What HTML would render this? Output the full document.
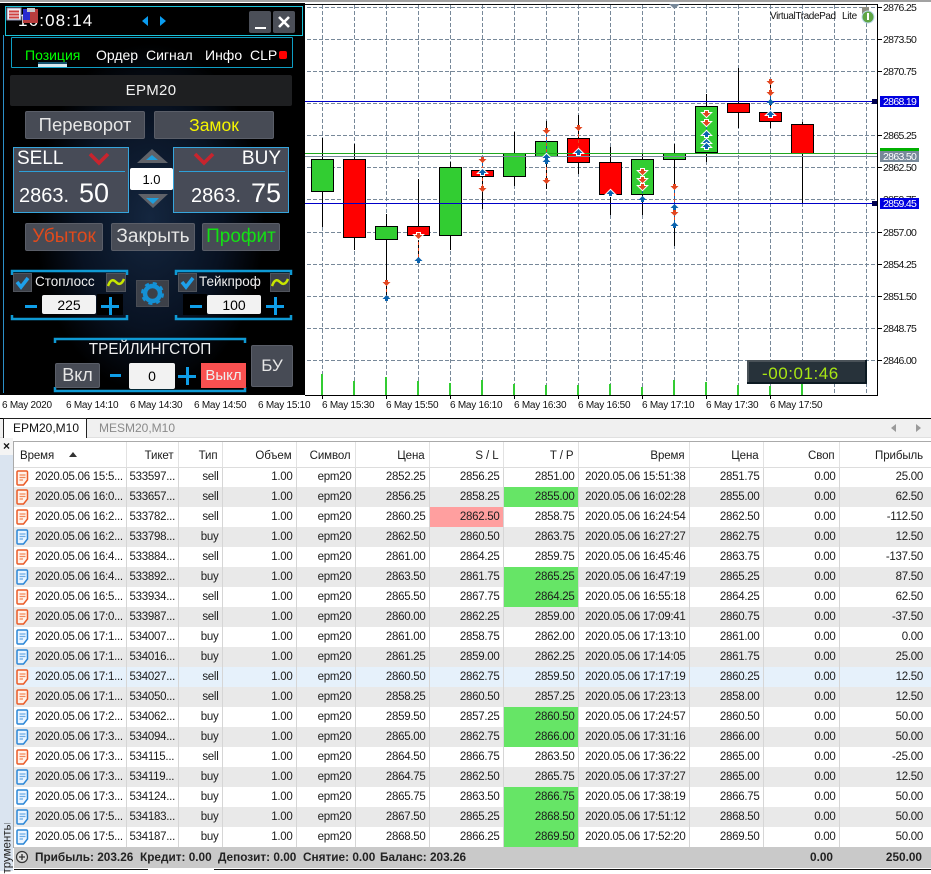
<!DOCTYPE html>
<html><head><meta charset="utf-8"><style>
html,body{margin:0;padding:0;background:#fff;width:931px;height:871px;overflow:hidden;font-family:"Liberation Sans",sans-serif}
.a{position:absolute;box-sizing:border-box;white-space:nowrap}
.c{display:flex;align-items:center;justify-content:center}
.btn{background:#474b55;border:1px solid #5a5e68;border-radius:2px;color:#e6e6e6}
.t{top:850px;font-size:11.8px;line-height:15px;font-weight:bold;color:#222}
table{position:absolute;left:14px;top:442px;width:917px;border-collapse:collapse;table-layout:fixed;font-size:11.5px;letter-spacing:-.27px;color:#1c1c1c}
td,th{height:20px;padding:0 3px 0 0;text-align:right;border-right:1px solid #d6d6d6;overflow:hidden;white-space:nowrap;box-sizing:border-box;font-weight:normal}
th{height:25px;background:#fff;border-bottom:1px solid #ddd;padding:3px 4px 0 0;border-right:1px solid #e2e2e2;letter-spacing:-.1px}
td:last-child,th:last-child{padding-right:8px;border-right:0}
tr.g td{background:#e9e9e9}tr.h td{background:#e6f1fb}
td.d{text-align:left;padding-left:21px;position:relative}
td.n{text-align:left;padding-left:3px}
td.p{background:#ff9f9f!important}td.u{background:#66e566!important}
td.d svg{position:absolute;left:2px;top:2px}
</style></head><body>
<svg class="a" style="left:0;top:0" width="931" height="420" viewBox="0 0 931 420" font-family="Liberation Sans,sans-serif">
<defs>
<path id="dn" d="M-1.500-3h3v2h2.500L0 3l-4-4h2.500z" fill="#e2451f"/>
<path id="up" d="M0-3l4 4H1.500v2h-3V1H-4z" fill="#0a62ae"/>
<path id="dnw" d="M-1.500-3h3v2h2.500L0 3l-4-4h2.500z" fill="#e2451f" stroke="#fff" stroke-width="2" paint-order="stroke"/>
<path id="upw" d="M0-3l4 4H1.500v2h-3V1H-4z" fill="#0a62ae" stroke="#fff" stroke-width="2" paint-order="stroke"/>
</defs>
<rect x="0" y="0" width="931" height="2" fill="#a2a2a2"/>
<rect x="305" y="4" width="572" height="1" fill="#111"/>
<g stroke="#778899" stroke-dasharray="4 2" shape-rendering="crispEdges" fill="none">
<path d="M307 7.500H877M307 39.500H877M307 71.500H877M307 103.500H877M307 135.500H877M307 167.500H877M307 199.500H877M307 232.500H877M307 264.500H877M307 296.500H877M307 328.500H877M307 360.500H877"/>
<path d="M322.500 5V395M354.500 5V395M386.500 5V395M418.500 5V395M450.500 5V395M482.500 5V395M514.500 5V395M546.500 5V395M578.500 5V395M610.500 5V395M642.500 5V395M674.500 5V395M706.500 5V395M738.500 5V395M770.500 5V395M802.500 5V395M834.500 5V395M866.500 5V395"/>
</g>
<g fill="#33cc33">
<rect x="321" y="374" width="2" height="21"/><rect x="353" y="381" width="2" height="14"/><rect x="385" y="377" width="2" height="18"/><rect x="417" y="381" width="2" height="14"/><rect x="449" y="383" width="2" height="12"/><rect x="481" y="380" width="2" height="15"/><rect x="513" y="384" width="2" height="11"/><rect x="545" y="385" width="2" height="10"/><rect x="577" y="385" width="2" height="10"/><rect x="609" y="384" width="2" height="11"/><rect x="641" y="387" width="2" height="8"/><rect x="673" y="380" width="2" height="15"/><rect x="705" y="382" width="2" height="13"/><rect x="737" y="385" width="2" height="10"/><rect x="769" y="386" width="2" height="9"/><rect x="801" y="384" width="2" height="11"/>
</g>
<path shape-rendering="crispEdges" stroke="#000" fill="none" d="M322.500 138V227M354.500 144V250M386.500 214V298M418.500 179V260M450.500 162V250M482.500 158V209M514.500 132V186M546.500 121V189M578.500 115V174M610.500 147V215M642.500 153V215M674.500 144V246M706.500 94V162M738.500 68V128M770.500 79V128M802.500 122V203"/>
<g shape-rendering="crispEdges" stroke="#000">
<rect x="311.500" y="159.500" width="22" height="32" fill="#32cd32"/>
<rect x="343.500" y="159.500" width="22" height="78" fill="#f00"/>
<rect x="375.500" y="226.500" width="22" height="13" fill="#32cd32"/>
<rect x="407.500" y="226.500" width="22" height="9" fill="#f00"/>
<rect x="439.500" y="167.500" width="22" height="68" fill="#32cd32"/>
<rect x="471.500" y="170.500" width="22" height="6" fill="#f00"/>
<rect x="503.500" y="153.500" width="22" height="23" fill="#32cd32"/>
<rect x="535.500" y="141.500" width="22" height="15" fill="#32cd32"/>
<rect x="567.500" y="138.500" width="22" height="24" fill="#f00"/>
<rect x="599.500" y="162.500" width="22" height="32" fill="#f00"/>
<rect x="631.500" y="159.500" width="22" height="35" fill="#32cd32"/>
<rect x="663.500" y="153.500" width="22" height="6" fill="#32cd32"/>
<rect x="695.500" y="106.500" width="22" height="46" fill="#32cd32"/>
<rect x="727.500" y="103.500" width="22" height="9" fill="#f00"/>
<rect x="759.500" y="112.500" width="22" height="9" fill="#f00"/>
<rect x="791.500" y="124.500" width="22" height="29" fill="#f00"/>
</g>
<g shape-rendering="crispEdges" fill="none" stroke-dasharray="3 3">
<path stroke="#e2451f" d="M386.500 283V298M418.500 236V260M482.500 160V189M546.500 131V181M578.500 128V152M642.500 172V199M674.500 187V225M706.500 114V146M770.500 82V114"/>
<path stroke="#0a62ae" stroke-dashoffset="3" d="M482.500 160V172M546.500 131V161M642.500 187V199M674.500 187V225M706.500 123V146M770.500 93V114"/>
</g>
<g shape-rendering="crispEdges">
<rect x="305" y="153" width="572" height="1" fill="#1fa81f"/>
<rect x="305" y="156" width="572" height="1" fill="#778899"/>
<rect x="305" y="101" width="572" height="1" fill="#0000c8"/>
<rect x="305" y="203" width="572" height="1" fill="#0000c8"/>
</g>
<use href="#dn" x="482.500" y="160"/><use href="#upw" x="482.500" y="172"/><use href="#dn" x="482.500" y="189"/>
<use href="#dn" x="546.500" y="131"/><use href="#upw" x="546.500" y="157"/><use href="#up" x="546.500" y="161"/><use href="#dn" x="546.500" y="181"/>
<use href="#dn" x="578.500" y="128"/><use href="#upw" x="578.500" y="152"/>
<use href="#upw" x="610.500" y="193"/>
<use href="#dn" x="386.500" y="283"/><use href="#up" x="386.500" y="298"/>
<use href="#dnw" x="418.500" y="236"/><use href="#up" x="418.500" y="260"/>
<use href="#dnw" x="706.500" y="114"/><use href="#dnw" x="706.500" y="123"/><use href="#upw" x="706.500" y="134"/><use href="#upw" x="706.500" y="142"/><use href="#upw" x="706.500" y="146"/>
<use href="#dn" x="770.500" y="82"/><use href="#dn" x="770.500" y="93"/><use href="#up" x="770.500" y="102"/><use href="#upw" x="770.500" y="114"/>
<use href="#dnw" x="642.500" y="172"/><use href="#dnw" x="642.500" y="180"/><use href="#dnw" x="642.500" y="187"/><use href="#up" x="642.500" y="199"/>
<use href="#dn" x="674.500" y="187"/><use href="#up" x="674.500" y="207"/><use href="#dn" x="674.500" y="213"/><use href="#up" x="674.500" y="225"/>
<path d="M669 4h11l-5.500 5z" fill="#778899"/>
<rect x="305" y="395" width="573" height="1" fill="#000"/>
<rect x="877" y="4" width="1" height="392" fill="#000"/>
<path shape-rendering="crispEdges" stroke="#000" d="M877 7.500h5M877 39.500h5M877 71.500h5M877 135.500h5M877 167.500h5M877 232.500h5M877 264.500h5M877 296.500h5M877 328.500h5M877 360.500h5M322.500 395v4M386.500 395v4M450.500 395v4M514.500 395v4M578.500 395v4M642.500 395v4M706.500 395v4M770.500 395v4"/>
<g font-size="10.500" letter-spacing="-.68" fill="#111">
<text x="883" y="11">2876.25</text><text x="883" y="43">2873.50</text><text x="883" y="75">2870.75</text><text x="883" y="139">2865.25</text><text x="883" y="171">2862.50</text><text x="883" y="236">2857.00</text><text x="883" y="268">2854.25</text><text x="883" y="300">2851.50</text><text x="883" y="332">2848.75</text><text x="883" y="364">2846.00</text><text x="883" y="203">2859.75</text>
</g>
<rect x="880" y="148" width="39" height="3" fill="#00b000"/>
<rect x="880" y="151" width="39" height="11" fill="#778899"/>
<text x="883" y="160" font-size="10.500" letter-spacing="-.68" fill="#fff">2863.50</text>
<rect x="880" y="96" width="39" height="11" fill="#0000e0"/><rect x="872" y="99" width="5" height="5" fill="#000050"/>
<text x="883" y="105" font-size="10.500" letter-spacing="-.68" fill="#fff">2868.19</text>
<rect x="880" y="198" width="39" height="11" fill="#0000e0"/><rect x="872" y="201" width="5" height="5" fill="#000050"/>
<text x="883" y="207" font-size="10.500" letter-spacing="-.68" fill="#fff">2859.45</text>
<text x="770" y="19" font-size="10" letter-spacing="-.4" fill="#111">VirtualTradePad</text>
<text x="842" y="19" font-size="10" letter-spacing="-.3" fill="#111">Lite</text>
<rect x="862" y="7" width="7" height="9" fill="#8c8c80"/><circle cx="868" cy="17" r="6" fill="#5ea545" stroke="#bcd9ef" stroke-width="1"/><rect x="867" y="13" width="2" height="7" fill="#fff"/>
<g font-size="10" letter-spacing="-.25" fill="#111">
<text x="2" y="408">6 May 2020</text><text x="66" y="408">6 May 14:10</text><text x="130" y="408">6 May 14:30</text><text x="194" y="408">6 May 14:50</text><text x="258" y="408">6 May 15:10</text><text x="322" y="408">6 May 15:30</text><text x="386" y="408">6 May 15:50</text><text x="450" y="408">6 May 16:10</text><text x="514" y="408">6 May 16:30</text><text x="578" y="408">6 May 16:50</text><text x="642" y="408">6 May 17:10</text><text x="706" y="408">6 May 17:30</text><text x="770" y="408">6 May 17:50</text>
</g>
<rect x="747" y="360" width="120" height="24" fill="#0c1a22"/><rect x="747" y="360" width="118" height="22" fill="#4a5258"/><rect x="749" y="362" width="116" height="20" fill="#27323a"/>
<text x="762" y="379" font-size="17" letter-spacing=".55" fill="#a8e614">-00:01:46</text>
</svg>

<div class="a" style="left:0;top:3px;width:305px;height:392px;background:radial-gradient(ellipse 125px 190px at 150px 215px,#14263f 0%,#081222 58%,#000 92%)"></div>
<div class="a" style="left:3px;top:35px;width:1px;height:358px;background:#2b8fc8"></div>
<div class="a" style="left:5px;top:6px;width:298px;height:30px;border:1px solid #19c3d8;background:#000"></div>
<div class="a" style="left:18px;top:11px;font-size:17px;letter-spacing:1.15px;color:#fff;line-height:20px">16:08:14</div>
<svg class="a" style="left:6px;top:7px" width="34" height="16"><rect x="17" y="2" width="15" height="14" fill="#b73d3d"/><rect x="17" y="2" width="7" height="11" fill="#2a2ad0"/><rect x="21" y="1" width="8" height="4" fill="#c8c8c8"/><rect x="1" y="1" width="14" height="12" fill="#f1f1f6" stroke="#8a8fb0"/><path d="M3 4.500h10M3 7.500h10M3 10.500h10" stroke="#d04040" stroke-width="2"/></svg>
<svg class="a" style="left:141px;top:15px" width="26" height="12"><path d="M7 1v10L1 6zM19 1v10l6-5z" fill="#0a9cf0"/></svg>
<div class="a c btn" style="left:249px;top:11px;width:22px;height:22px;border:0;background:#4b4f58"><div style="width:11px;height:2px;background:#fff;margin-top:11px"></div></div>
<div class="a" style="left:273px;top:11px;width:22px;height:22px;background:#4b4f58;border-radius:2px"><svg width="22" height="22"><path d="M6 6l10 10M16 6L6 16" stroke="#fff" stroke-width="2.600"/></svg></div>
<div class="a" style="left:11px;top:37px;width:282px;height:31px;border:1px solid #0e9ec4;border-radius:1px"></div>
<div class="a" style="top:46px;left:25px;font-size:14px;line-height:18px;color:#0f0">Позиция</div>
<div class="a" style="top:46px;left:96px;font-size:14px;line-height:18px;color:#fff">Ордер</div>
<div class="a" style="top:46px;left:146px;font-size:14px;line-height:18px;color:#fff">Сигнал</div>
<div class="a" style="top:46px;left:205px;font-size:14px;line-height:18px;color:#fff">Инфо</div>
<div class="a" style="top:46px;left:250px;font-size:14px;line-height:18px;color:#fff">CLP</div>
<div class="a" style="left:279px;top:51px;width:8px;height:8px;background:#f00;border-radius:2px"></div>
<div class="a" style="left:38px;top:62px;width:29px;height:5px;background:linear-gradient(#14506c 0,#14506c 40%,#d8e8ee 41%,#d8e8ee 100%)"></div>
<div class="a c" style="left:10px;top:75px;width:282px;height:31px;background:#1e1f21;border-radius:2px;color:#f2f2f2;font-size:15px;letter-spacing:.3px">EPM20</div>
<div class="a c btn" style="left:25px;top:111px;width:120px;height:28px;font-size:18.500px">Переворот</div>
<div class="a c btn" style="left:154px;top:111px;width:120px;height:28px;font-size:17.500px;color:#f5f500">Замок</div>

<div class="a" style="left:13px;top:147px;width:116px;height:66px;background:#474b57;border:1px solid #36a5dc"></div>
<div class="a" style="left:19px;top:171px;width:106px;height:1px;background:#2ea0d8"></div>
<div class="a" style="left:17px;top:148px;font-size:19px;line-height:22px;color:#fff">SELL</div>
<svg class="a" style="left:88px;top:152px" width="22" height="15"><path d="M2 2l9 9 9-9" fill="none" stroke="#c8242e" stroke-width="3.600"/></svg>
<div class="a" style="left:19px;top:185px;font-size:20px;line-height:22px;color:#fff">2863.</div>
<div class="a" style="left:79px;top:178px;font-size:27px;line-height:30px;color:#fff">50</div>
<div class="a" style="left:173px;top:147px;width:116px;height:66px;background:#474b57;border:1px solid #36a5dc"></div>
<div class="a" style="left:179px;top:171px;width:106px;height:1px;background:#2ea0d8"></div>
<div class="a" style="right:650px;top:148px;font-size:19px;line-height:22px;color:#fff">BUY</div>
<svg class="a" style="left:193px;top:152px" width="22" height="15"><path d="M2 2l9 9 9-9" fill="none" stroke="#c8242e" stroke-width="3.600"/></svg>
<div class="a" style="left:191px;top:185px;font-size:20px;line-height:22px;color:#fff">2863.</div>
<div class="a" style="left:251px;top:178px;font-size:27px;line-height:30px;color:#fff">75</div>
<svg class="a" style="left:136px;top:148px" width="34" height="62"><path d="M1 15L16 1l16 14z" fill="#5f6269"/><path d="M10 12l6-5 6 5z" fill="#1f9edc"/><path d="M2 46h30L17 60z" fill="#5f6269"/><path d="M10 50h13l-6 6z" fill="#1f9edc"/></svg>
<div class="a c" style="left:130px;top:168px;width:43px;height:22px;background:#fff;border-radius:2px;font-size:13px;color:#000">1.0</div>

<div class="a c btn" style="left:25px;top:223px;width:78px;height:28px;font-size:19px;color:#e04a1c">Убыток</div>
<div class="a c btn" style="left:111px;top:223px;width:84px;height:28px;font-size:19px">Закрыть</div>
<div class="a c btn" style="left:202px;top:223px;width:78px;height:28px;font-size:19px;color:#14e014">Профит</div>

<svg class="a" style="left:0;top:265px" width="305" height="132" fill="none" stroke="#0f9ad4" stroke-width="2.500">
<path d="M12 10V6h115v4M12 50v4h115v-4M176 10V6h115v4M176 50v4h115v-4M55 78v-4h190v4M55 122v4h190v-4"/>
</svg>
<div class="a" style="left:13px;top:273px;width:19px;height:19px;background:#3c4048;border:1px solid #50545c"><svg width="17" height="17"><path d="M3 8l4 5 7-9" fill="none" stroke="#1ea0ea" stroke-width="3.500"/></svg></div>
<div class="a" style="left:35px;top:274px;font-size:13.500px;line-height:16px;color:#eee">Стоплосс</div>
<div class="a" style="left:106px;top:273px;width:20px;height:19px;background:#3c4048;border:1px solid #50545c"><svg width="18" height="17"><path d="M1 12c3-8 6-6 8-4s5 4 8-3" fill="none" stroke="#c8e600" stroke-width="2.500"/></svg></div>
<div class="a" style="left:97px;top:294px;width:26px;height:21px;background:#000"></div>
<div class="a" style="left:25px;top:305px;width:12px;height:3px;background:#0f9ee8"></div>
<div class="a c" style="left:42px;top:295px;width:54px;height:19px;background:#f2f2f2;border-radius:2px;font-size:14px;color:#000">225</div>
<div class="a" style="left:101px;top:305px;width:18px;height:3px;background:#0f9ee8"></div><div class="a" style="left:109px;top:297px;width:3px;height:18px;background:#0f9ee8"></div>
<div class="a" style="left:136px;top:280px;width:33px;height:27px;background:#3c4048;border:1px solid #484c54"><svg width="31" height="25"><circle cx="15.500" cy="12.500" r="7.500" fill="none" stroke="#1490d4" stroke-width="4.500"/><circle cx="15.500" cy="12.500" r="10" fill="none" stroke="#1490d4" stroke-width="3" stroke-dasharray="4 3.850"/></svg></div>

<div class="a" style="left:178px;top:273px;width:19px;height:19px;background:#3c4048;border:1px solid #50545c"><svg width="17" height="17"><path d="M3 8l4 5 7-9" fill="none" stroke="#1ea0ea" stroke-width="3.500"/></svg></div>
<div class="a" style="left:199px;top:274px;font-size:13.500px;line-height:16px;color:#eee">Тейкпроф</div>
<div class="a" style="left:270px;top:273px;width:20px;height:19px;background:#3c4048;border:1px solid #50545c"><svg width="18" height="17"><path d="M1 12c3-8 6-6 8-4s5 4 8-3" fill="none" stroke="#c8e600" stroke-width="2.500"/></svg></div>
<div class="a" style="left:183px;top:294px;width:24px;height:21px;background:#000"></div>
<div class="a" style="left:190px;top:305px;width:12px;height:3px;background:#0f9ee8"></div>
<div class="a c" style="left:207px;top:295px;width:54px;height:19px;background:#f2f2f2;border-radius:2px;font-size:14px;color:#000">100</div>
<div class="a" style="left:266px;top:305px;width:18px;height:3px;background:#0f9ee8"></div><div class="a" style="left:274px;top:297px;width:3px;height:18px;background:#0f9ee8"></div>

<div class="a c" style="left:54px;top:341px;width:192px;height:18px;font-size:15.300px;color:#eee">ТРЕЙЛИНГСТОП</div>
<div class="a c btn" style="left:55px;top:363px;width:45px;height:25px;font-size:18px">Вкл</div>
<div class="a" style="left:110px;top:374px;width:11px;height:3px;background:#0f9ee8"></div>
<div class="a c" style="left:129px;top:363px;width:46px;height:26px;background:#f2f2f2;border-radius:2px;font-size:14px;color:#000">0</div>
<div class="a" style="left:178px;top:375px;width:18px;height:3px;background:#0f9ee8"></div><div class="a" style="left:186px;top:367px;width:3px;height:18px;background:#0f9ee8"></div>
<div class="a c" style="left:201px;top:363px;width:45px;height:25px;background:#f85050;color:#eee;font-size:15px">Выкл</div>
<div class="a c btn" style="left:251px;top:345px;width:42px;height:42px;font-size:17px">БУ</div>

<div class="a" style="left:0;top:418px;width:931px;height:20px;background:#f0f0f0;border-top:1px solid #000;border-bottom:1px solid #e0e0e0"></div>
<div class="a" style="left:3px;top:418px;width:84px;height:20px;background:#fff;border:1px solid #222;border-bottom:0"></div>
<div class="a" style="left:13px;top:421px;font-size:12px;line-height:15px;color:#111">EPM20,M10</div>
<div class="a" style="left:99px;top:421px;font-size:12px;line-height:15px;color:#8a8a8a">MESM20,M10</div>
<svg class="a" style="left:890px;top:423px" width="32" height="10"><path d="M6 1v8L1 5zM26 1v8l5-4z" fill="#9a9a9a"/></svg>

<div class="a" style="left:0;top:440px;width:13px;height:431px;background:#dae4f0"></div>
<div class="a" style="left:0;top:438px;width:13px;height:17px;background:#f4f4f4;font-size:12px;line-height:16px;text-align:center;font-weight:bold;color:#111">×</div>
<div class="a" style="left:-17px;top:842px;width:50px;height:13px;font-size:11.500px;line-height:13px;transform:rotate(-90deg);color:#222;text-align:left;overflow:hidden">трументы</div>
<div class="a" style="left:13px;top:441px;width:918px;height:1px;background:#aaa"></div>
<div class="a" style="left:13px;top:441px;width:1px;height:407px;background:#aaa"></div>

<svg width="0" height="0" style="position:absolute"><defs>
<g id="os"><path d="M2 1h8.500c.5 0 1 .5 1 1v8l-4 5H2c-.5 0-1-.5-1-1V2c0-.5.5-1 1-1z" fill="#fff2ea" stroke="#ea5a26" stroke-width="1.500"/><path d="M3.500 5h6M3.500 7.500h6M3.500 10h3.500" stroke="#f08858" stroke-width="1.200"/></g>
<g id="bs"><path d="M2 1h8.500c.5 0 1 .5 1 1v8l-4 5H2c-.5 0-1-.5-1-1V2c0-.5.5-1 1-1z" fill="#eaf4ff" stroke="#2a86d6" stroke-width="1.500"/><path d="M3.500 5h6M3.500 7.500h6M3.500 10h3.500" stroke="#6aaae4" stroke-width="1.200"/></g>
</defs></svg>

<table>
<colgroup><col style="width:112px"><col style="width:52px"><col style="width:44px"><col style="width:74px"><col style="width:59px"><col style="width:74px"><col style="width:74px"><col style="width:75px"><col style="width:111px"><col style="width:74px"><col style="width:76px"><col style="width:92px"></colgroup>
<tr><th style="text-align:left;padding-left:6px">Время<svg width="8" height="5" style="margin-left:15px;vertical-align:2px"><path d="M4 0l4 5H0z" fill="#333"/></svg></th><th>Тикет</th><th>Тип</th><th>Объем</th><th>Символ</th><th>Цена</th><th>S / L</th><th>T / P</th><th>Время</th><th>Цена</th><th>Своп</th><th>Прибыль</th></tr>
<tr><td class="d"><svg width="13" height="16"><use href="#os"/></svg>2020.05.06 15:5...</td><td class="n">533597...</td><td>sell</td><td>1.00</td><td>epm20</td><td>2852.25</td><td>2856.25</td><td>2851.00</td><td>2020.05.06 15:51:38</td><td>2851.75</td><td>0.00</td><td>25.00</td></tr>
<tr class="g"><td class="d"><svg width="13" height="16"><use href="#os"/></svg>2020.05.06 16:0...</td><td class="n">533657...</td><td>sell</td><td>1.00</td><td>epm20</td><td>2856.25</td><td>2858.25</td><td class="u">2855.00</td><td>2020.05.06 16:02:28</td><td>2855.00</td><td>0.00</td><td>62.50</td></tr>
<tr><td class="d"><svg width="13" height="16"><use href="#os"/></svg>2020.05.06 16:2...</td><td class="n">533782...</td><td>sell</td><td>1.00</td><td>epm20</td><td>2860.25</td><td class="p">2862.50</td><td>2858.75</td><td>2020.05.06 16:24:54</td><td>2862.50</td><td>0.00</td><td>-112.50</td></tr>
<tr class="g"><td class="d"><svg width="13" height="16"><use href="#bs"/></svg>2020.05.06 16:2...</td><td class="n">533798...</td><td>buy</td><td>1.00</td><td>epm20</td><td>2862.50</td><td>2860.50</td><td>2863.75</td><td>2020.05.06 16:27:27</td><td>2862.75</td><td>0.00</td><td>12.50</td></tr>
<tr><td class="d"><svg width="13" height="16"><use href="#os"/></svg>2020.05.06 16:4...</td><td class="n">533884...</td><td>sell</td><td>1.00</td><td>epm20</td><td>2861.00</td><td>2864.25</td><td>2859.75</td><td>2020.05.06 16:45:46</td><td>2863.75</td><td>0.00</td><td>-137.50</td></tr>
<tr class="g"><td class="d"><svg width="13" height="16"><use href="#bs"/></svg>2020.05.06 16:4...</td><td class="n">533892...</td><td>buy</td><td>1.00</td><td>epm20</td><td>2863.50</td><td>2861.75</td><td class="u">2865.25</td><td>2020.05.06 16:47:19</td><td>2865.25</td><td>0.00</td><td>87.50</td></tr>
<tr><td class="d"><svg width="13" height="16"><use href="#os"/></svg>2020.05.06 16:5...</td><td class="n">533934...</td><td>sell</td><td>1.00</td><td>epm20</td><td>2865.50</td><td>2867.75</td><td class="u">2864.25</td><td>2020.05.06 16:55:18</td><td>2864.25</td><td>0.00</td><td>62.50</td></tr>
<tr class="g"><td class="d"><svg width="13" height="16"><use href="#os"/></svg>2020.05.06 17:0...</td><td class="n">533987...</td><td>sell</td><td>1.00</td><td>epm20</td><td>2860.00</td><td>2862.25</td><td>2859.00</td><td>2020.05.06 17:09:41</td><td>2860.75</td><td>0.00</td><td>-37.50</td></tr>
<tr><td class="d"><svg width="13" height="16"><use href="#bs"/></svg>2020.05.06 17:1...</td><td class="n">534007...</td><td>buy</td><td>1.00</td><td>epm20</td><td>2861.00</td><td>2858.75</td><td>2862.00</td><td>2020.05.06 17:13:10</td><td>2861.00</td><td>0.00</td><td>0.00</td></tr>
<tr class="g"><td class="d"><svg width="13" height="16"><use href="#bs"/></svg>2020.05.06 17:1...</td><td class="n">534016...</td><td>buy</td><td>1.00</td><td>epm20</td><td>2861.25</td><td>2859.00</td><td>2862.25</td><td>2020.05.06 17:14:05</td><td>2861.75</td><td>0.00</td><td>25.00</td></tr>
<tr class="h"><td class="d"><svg width="13" height="16"><use href="#os"/></svg>2020.05.06 17:1...</td><td class="n">534027...</td><td>sell</td><td>1.00</td><td>epm20</td><td>2860.50</td><td>2862.75</td><td>2859.50</td><td>2020.05.06 17:17:19</td><td>2860.25</td><td>0.00</td><td>12.50</td></tr>
<tr class="g"><td class="d"><svg width="13" height="16"><use href="#os"/></svg>2020.05.06 17:1...</td><td class="n">534050...</td><td>sell</td><td>1.00</td><td>epm20</td><td>2858.25</td><td>2860.50</td><td>2857.25</td><td>2020.05.06 17:23:13</td><td>2858.00</td><td>0.00</td><td>12.50</td></tr>
<tr><td class="d"><svg width="13" height="16"><use href="#bs"/></svg>2020.05.06 17:2...</td><td class="n">534062...</td><td>buy</td><td>1.00</td><td>epm20</td><td>2859.50</td><td>2857.25</td><td class="u">2860.50</td><td>2020.05.06 17:24:57</td><td>2860.50</td><td>0.00</td><td>50.00</td></tr>
<tr class="g"><td class="d"><svg width="13" height="16"><use href="#bs"/></svg>2020.05.06 17:3...</td><td class="n">534094...</td><td>buy</td><td>1.00</td><td>epm20</td><td>2865.00</td><td>2862.75</td><td class="u">2866.00</td><td>2020.05.06 17:31:16</td><td>2866.00</td><td>0.00</td><td>50.00</td></tr>
<tr><td class="d"><svg width="13" height="16"><use href="#os"/></svg>2020.05.06 17:3...</td><td class="n">534115...</td><td>sell</td><td>1.00</td><td>epm20</td><td>2864.50</td><td>2866.75</td><td>2863.50</td><td>2020.05.06 17:36:22</td><td>2865.00</td><td>0.00</td><td>-25.00</td></tr>
<tr class="g"><td class="d"><svg width="13" height="16"><use href="#bs"/></svg>2020.05.06 17:3...</td><td class="n">534119...</td><td>buy</td><td>1.00</td><td>epm20</td><td>2864.75</td><td>2862.50</td><td>2865.75</td><td>2020.05.06 17:37:27</td><td>2865.00</td><td>0.00</td><td>12.50</td></tr>
<tr><td class="d"><svg width="13" height="16"><use href="#bs"/></svg>2020.05.06 17:3...</td><td class="n">534124...</td><td>buy</td><td>1.00</td><td>epm20</td><td>2865.75</td><td>2863.50</td><td class="u">2866.75</td><td>2020.05.06 17:38:19</td><td>2866.75</td><td>0.00</td><td>50.00</td></tr>
<tr class="g"><td class="d"><svg width="13" height="16"><use href="#bs"/></svg>2020.05.06 17:5...</td><td class="n">534183...</td><td>buy</td><td>1.00</td><td>epm20</td><td>2867.50</td><td>2865.25</td><td class="u">2868.50</td><td>2020.05.06 17:51:12</td><td>2868.50</td><td>0.00</td><td>50.00</td></tr>
<tr><td class="d"><svg width="13" height="16"><use href="#bs"/></svg>2020.05.06 17:5...</td><td class="n">534187...</td><td>buy</td><td>1.00</td><td>epm20</td><td>2868.50</td><td>2866.25</td><td class="u">2869.50</td><td>2020.05.06 17:52:20</td><td>2869.50</td><td>0.00</td><td>50.00</td></tr>
</table>

<div class="a" style="left:14px;top:847px;width:917px;height:21px;background:#c9c9c9"></div>
<svg class="a" style="left:15px;top:850px" width="14" height="14"><circle cx="7" cy="7" r="5.500" fill="#ddd" stroke="#333" stroke-width="1.200"/><path d="M4 7h6M7 4v6" stroke="#333" stroke-width="1.300"/></svg>
<div class="a t" style="left:35px">Прибыль: 203.26</div>
<div class="a t" style="left:140px">Кредит: 0.00</div>
<div class="a t" style="left:218px">Депозит: 0.00</div>
<div class="a t" style="left:303px">Снятие: 0.00</div>
<div class="a t" style="left:380px">Баланс: 203.26</div>
<div class="a t" style="right:98px">0.00</div>
<div class="a t" style="right:9px">250.00</div>
<div class="a" style="left:14px;top:869px;width:134px;height:1px;background:#111"></div>
<div class="a" style="left:214px;top:869px;width:717px;height:1px;background:#111"></div>
</body></html>
